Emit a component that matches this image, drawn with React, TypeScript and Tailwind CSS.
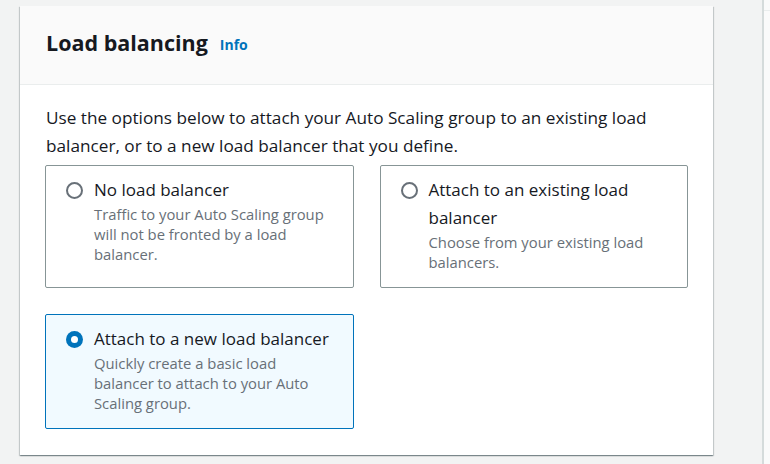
const options = [
  {
    id: 'none',
    title: 'No load balancer',
    desc: 'Traffic to your Auto Scaling group will not be fronted by a load balancer.',
  },
  {
    id: 'existing',
    title: 'Attach to an existing load balancer',
    desc: 'Choose from your existing load balancers.',
  },
  {
    id: 'new',
    title: 'Attach to a new load balancer',
    desc: 'Quickly create a basic load balancer to attach to your Auto Scaling group.',
  },
];

const Radio = ({ checked }: { checked: boolean }) =>
  checked ? (
    <span className="block w-[17px] h-[17px] rounded-full bg-[#0073bb] flex items-center justify-center">
      <span className="block w-[7px] h-[7px] rounded-full bg-white" />
    </span>
  ) : (
    <span className="block w-[17px] h-[17px] rounded-full border-2 border-[#687078] bg-white" />
  );

const App = () => {
  const selected = 'new';

  return (
    <div className="flex w-[770px] h-[464px] bg-[#f2f3f3] font-['Open_Sans',sans-serif] text-[#16191f] overflow-hidden">
      <div className="w-[762px] pl-5 pt-[6px]">
        <div className="w-[693px] bg-white shadow-[0_1px_1px_0_rgba(0,28,36,0.3),1px_1px_1px_0_rgba(0,28,36,0.15),-1px_1px_1px_0_rgba(0,28,36,0.15)]">
          <div className="h-[79px] bg-[#fafafa] border-b border-[#eaeded] px-[26px] pb-1 flex items-center">
            <h2 className="text-[21.5px] font-bold">Load balancing</h2>
            <a className="ml-[12px] mt-[3px] text-[14px] font-bold text-[#0073bb]">Info</a>
          </div>
          <div className="px-[25px] pt-[19px] pb-[26px]">
            <p className="text-[17.2px] leading-[28px] pl-px pr-8">
              Use the options below to attach your Auto Scaling group to an existing load balancer, or
              to a new load balancer that you define.
            </p>
            <div className="mt-[5px] grid grid-cols-2 gap-[26px]">
              {options.map((o) => {
                const on = o.id === selected;
                return (
                  <div
                    key={o.id}
                    className={`rounded-[2px] border pt-[10px] pb-[15px] px-5 flex gap-[11px] ${
                      on ? 'bg-[#f1faff] border-[#0073bb]' : 'bg-white border-[#879596]'
                    }`}
                  >
                    <div className="h-[28px] flex items-center shrink-0">
                      <Radio checked={on} />
                    </div>
                    <div>
                      <div className="text-[17px] leading-[28px]">{o.title}</div>
                      <div className="text-[14.8px] leading-[20px] text-[#687078]">{o.desc}</div>
                    </div>
                  </div>
                );
              })}
            </div>
          </div>
        </div>
      </div>
      <div className="flex-1 border-l-2 border-[#d5dbdb] bg-[#fafafa] pt-[10px]">
        <div className="border-t border-[#eaeded]" />
      </div>
    </div>
  );
};

export default App;
